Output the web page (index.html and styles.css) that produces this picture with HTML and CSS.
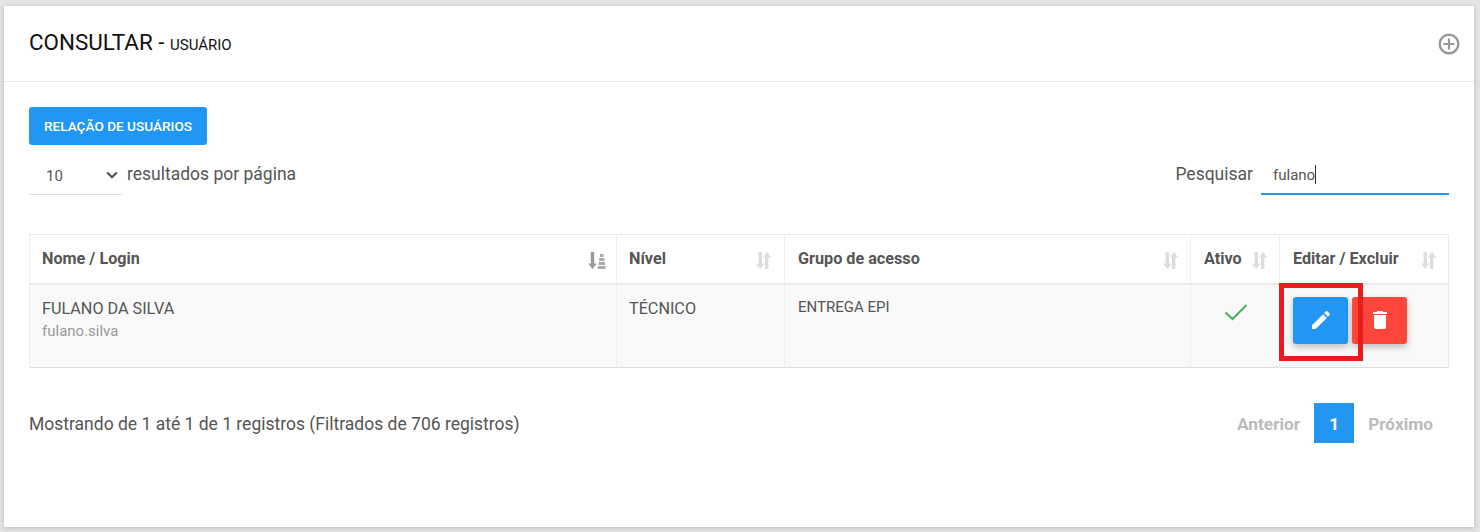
FILE: index.html
```html
<!DOCTYPE html>
<html lang="pt-BR">
<head>
<meta charset="utf-8">
<title>Consultar - Usuário</title>
<link rel="stylesheet" href="styles.css">
</head>
<body>
<main class="card">
  <header class="card-head">
    <h1 class="title">CONSULTAR - <small>USUÁRIO</small></h1>
    <svg class="add-icon" width="24" height="24" viewBox="0 0 24 24"><circle cx="12" cy="12" r="9.3" fill="none" stroke="#999" stroke-width="2.4"/><path d="M12 6.5v11M6.5 12h11" stroke="#999" stroke-width="2.2" fill="none"/></svg>
  </header>
  <section class="card-body">
    <button class="btn-list">RELAÇÃO DE USUÁRIOS</button>
    <div class="controls">
      <div class="length">
        <div class="select"><span>10</span><svg width="12" height="8" viewBox="0 0 12 8"><path d="M1.2 1.5 6 6.2l4.8-4.7" fill="none" stroke="#555" stroke-width="2.2"/></svg></div>
        <span class="length-label">resultados por página</span>
      </div>
      <div class="search">
        <label class="search-label">Pesquisar</label>
        <div class="search-input"><span>fulano</span><i class="caret"></i></div>
      </div>
    </div>
    <table class="grid">
      <colgroup><col class="c1"><col class="c2"><col class="c3"><col class="c4"><col class="c5"></colgroup>
      <thead>
        <tr>
          <th><div class="th-in">Nome / Login<svg class="sort" width="18" height="18" viewBox="0 0 18 18"><path d="M2.8 0h3.4v11.5h2.6L4.5 17 .2 11.5h2.6z" fill="#999"/><path d="M10 14h7.6v3H10zM10.6 10h6.4v3h-6.4zM11.2 6h5.2v3h-5.2zM12 2h3.6v3H12z" fill="#aaa"/></svg></div></th>
          <th><div class="th-in">Nível<svg class="sort" width="18" height="18" viewBox="0 0 18 18"><use href="#sortboth"/></svg></div></th>
          <th><div class="th-in">Grupo de acesso<svg class="sort" width="18" height="18" viewBox="0 0 18 18"><use href="#sortboth"/></svg></div></th>
          <th><div class="th-in">Ativo<svg class="sort" width="18" height="18" viewBox="0 0 18 18"><use href="#sortboth"/></svg></div></th>
          <th><div class="th-in">Editar / Excluir<svg class="sort" width="18" height="18" viewBox="0 0 18 18"><use href="#sortboth"/></svg></div></th>
        </tr>
      </thead>
      <tbody>
        <tr>
          <td><div class="name">FULANO DA SILVA</div><div class="login">fulano.silva</div></td>
          <td><div class="name">TÉCNICO</div></td>
          <td><div class="group">ENTREGA EPI</div></td>
          <td class="center"><svg class="check" width="24" height="18" viewBox="0 0 24 18"><path d="M1.5 9.5 8.5 16 22.5 2" fill="none" stroke="#4caf50" stroke-width="2"/></svg></td>
          <td class="actions">
            <div class="action-row">
              <button class="btn-act blue"><svg width="24" height="24" viewBox="0 0 24 24"><path fill="#fff" d="M3 17.25V21h3.75L17.81 9.94l-3.75-3.75L3 17.25zM20.71 7.04a1 1 0 0 0 0-1.41l-2.34-2.34a1 1 0 0 0-1.41 0l-1.83 1.83 3.75 3.75 1.83-1.83z"/></svg></button>
              <button class="btn-act red"><svg width="24" height="24" viewBox="0 0 24 24"><path fill="#fff" d="M6 19a2 2 0 0 0 2 2h8a2 2 0 0 0 2-2V7H6v12zM19 4h-3.5l-1-1h-5l-1 1H5v2h14V4z"/></svg></button>
            </div>
            <div class="highlight"></div>
          </td>
        </tr>
      </tbody>
    </table>
    <footer class="foot">
      <div class="info">Mostrando de 1 até 1 de 1 registros (Filtrados de 706 registros)</div>
      <nav class="pager"><span class="pg">Anterior</span><span class="pg current">1</span><span class="pg">Próximo</span></nav>
    </footer>
  </section>
</main>
<svg class="defs" width="0" height="0"><defs><g id="sortboth"><path d="M2.6 0H6v11.5h2.6L4.3 17 0 11.5h2.6z" fill="#ddd"/><path d="M12.4 17H9V5.5H6.9L11 0l4.3 5.5h-2.9z" fill="#ddd"/></g></defs></svg>
</body>
</html>
```
FILE: styles.css
```css
* { box-sizing: border-box; }
html, body { height: 100%; }
body {
  margin: 0;
  padding: 6px 6px 5px 4px;
  background: #e4e4e4;
  font-family: Roboto, "Liberation Sans", sans-serif;
  color: #555;
  overflow: hidden;
}
.card {
  height: 521px;
  background: #fff;
  box-shadow: 0 1px 5px rgba(0,0,0,.18);
}
.card-head {
  height: 76px;
  border-bottom: 1px solid #eaeaea;
  padding: 0 13px 0 25px;
  display: flex;
  align-items: center;
  justify-content: space-between;
}
.title {
  margin: -3px 0 0;
  font-size: 22.4px;
  font-weight: 400;
  color: #111;
}
.title small { font-size: 15px; }
.add-icon { margin-top: 1px; }
.card-body { padding: 25px 25px 0; }
.btn-list {
  display: block;
  width: 178px;
  height: 38px;
  border: 0;
  border-radius: 3px;
  background: #2196f3;
  color: #fff;
  font: 500 13.6px Roboto, sans-serif;
  padding: 0;
}
.controls {
  display: flex;
  justify-content: space-between;
  height: 50px;
}
.length { display: flex; align-items: flex-start; }
.select {
  width: 93px;
  height: 50px;
  border-bottom: 1px solid #ddd;
  display: flex;
  justify-content: space-between;
  align-items: center;
  padding: 13px 4px 0 17px;
  font-size: 15px;
  color: #555;
}
.select svg { margin-top: -2px; }
.length-label { font-size: 17.5px; margin: 19px 0 0 5px; line-height: 20px; }
.search { display: flex; align-items: flex-start; }
.search-label { font-size: 17.5px; line-height: 20px; margin: 19px 8px 0 0; }
.search-input {
  width: 188px;
  height: 50px;
  border-bottom: 2px solid #2196f3;
  padding: 20px 0 0 12px;
  font-size: 15px;
  line-height: 20px;
  display: flex;
  align-items: flex-start;
}
.caret { width: 1px; height: 19px; background: #333; }
.grid {
  margin-top: 39px;
  width: 1419px;
  border-collapse: collapse;
  table-layout: fixed;
  border: 1px solid #eaeaea;
}
.c1 { width: 587px; }
.c2 { width: 168px; }
.c3 { width: 406px; }
.c4 { width: 89px; }
.c5 { width: 169px; }
.grid th, .grid td { border-left: 1px solid #eee; padding: 0; text-align: left; vertical-align: top; }
.grid th {
  height: 49px;
  border-bottom: 2px solid #eaeaea;
  font-size: 16.2px;
  font-weight: 700;
}
.th-in {
  display: flex;
  justify-content: space-between;
  padding: 15px 10px 0 12px;
  line-height: 18px;
}
.grid th:nth-child(n+3) .th-in { padding: 15px 9px 0 13px; }
.sort { margin-top: 2px; }
.grid td {
  height: 84px;
  background: #f9f9f9;
  padding: 14px 12px 0;
}
.grid tbody tr { border-bottom: 1px solid #ddd; }
.name { font-size: 16.2px; line-height: 20px; }
.login { font-size: 15px; line-height: 20px; color: #999; margin-top: 2px; }
.group { font-size: 15px; line-height: 18px; margin: -1px 0 0 1px; }
.center { text-align: center !important; }
.check { margin-top: 4px; margin-left: 1px; }
.grid td.actions { position: relative; padding: 12px 13px 0; }
.action-row { display: flex; gap: 4px; }
.btn-act {
  width: 55px;
  height: 47px;
  border: 0;
  border-radius: 3px;
  padding: 0;
  display: flex;
  align-items: center;
  justify-content: center;
  box-shadow: 0 3px 7px rgba(0,0,0,.24);
}
.blue { background: #2196f3; }
.red { background: #ff463b; }
.highlight {
  position: absolute;
  left: -1px;
  top: -2px;
  width: 84px;
  height: 78px;
  border: 5px solid #e81c1f;
  pointer-events: none;
}
.foot {
  display: flex;
  justify-content: space-between;
  align-items: center;
  margin-top: 35px;
  height: 40px;
}
.info { font-size: 17.5px; margin-top: 2px; }
.pager { display: flex; align-items: center; padding-right: 2px; }
.pg {
  font-size: 17.3px;
  font-weight: 700;
  color: #bbb;
  padding: 0 14px;
  height: 40px;
  line-height: 42px;
}
.pg.current {
  width: 40px;
  padding: 0;
  text-align: center;
  background: #2196f3;
  color: #fff;
}
.defs { position: absolute; }
```
